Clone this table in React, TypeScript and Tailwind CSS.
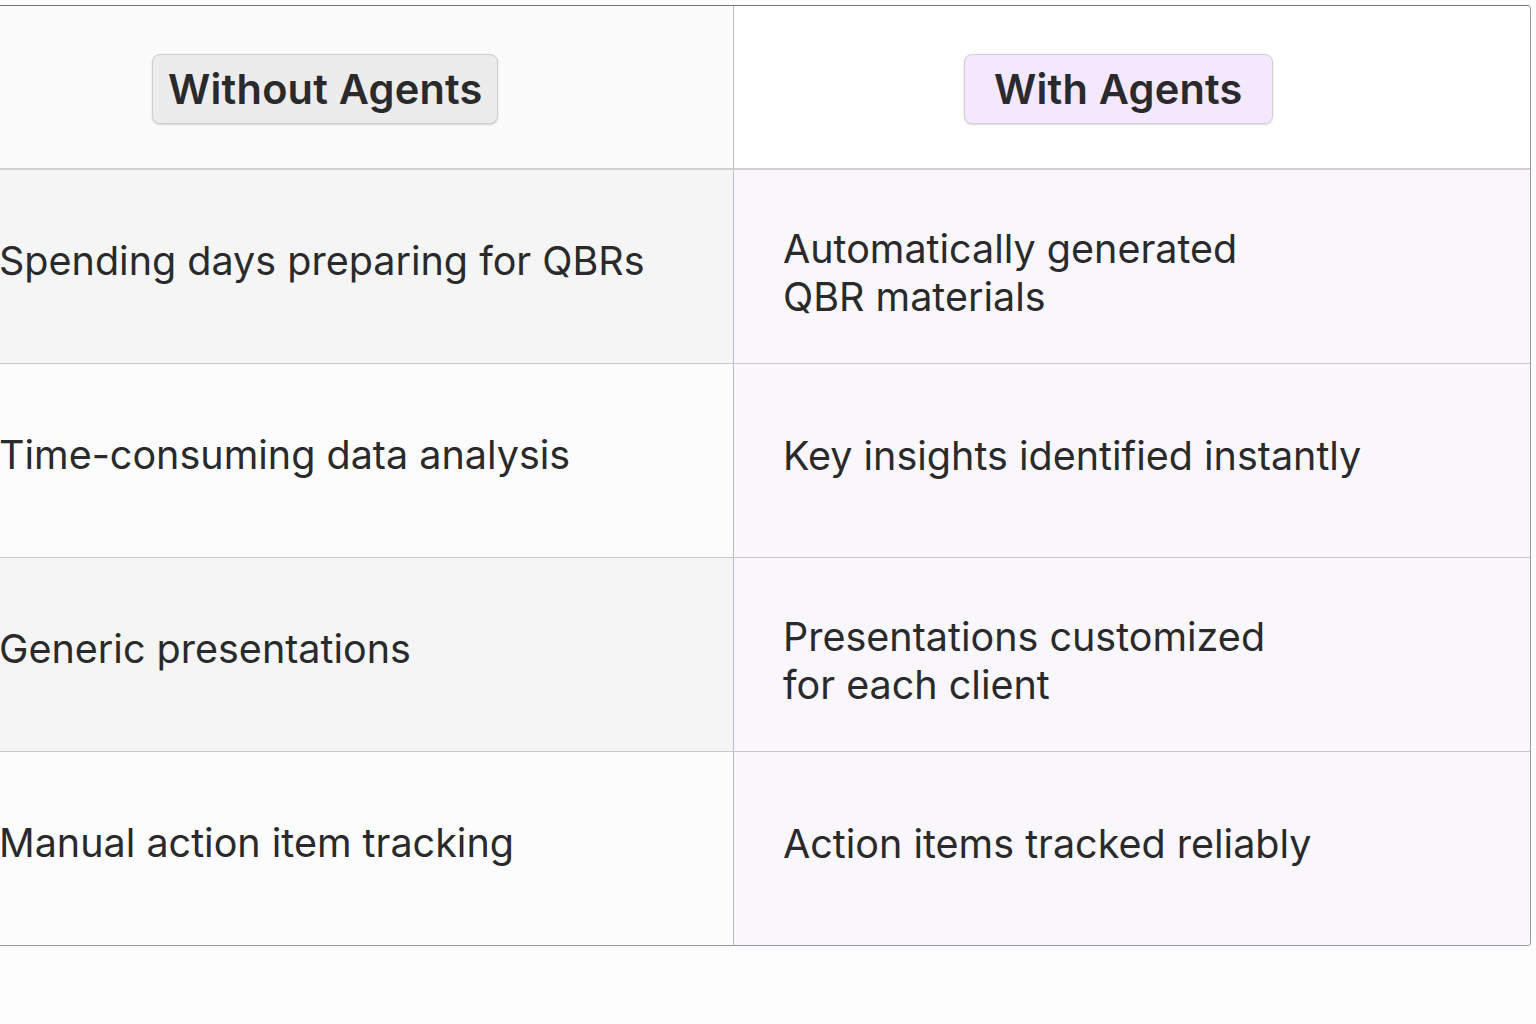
import * as React from 'react';

const rows = [
  { without: 'Spending days preparing for QBRs', with: ['Automatically generated', 'QBR materials'] },
  { without: 'Time-consuming data analysis', with: ['Key insights identified instantly'] },
  { without: 'Generic presentations', with: ['Presentations customized', 'for each client'] },
  { without: 'Manual action item tracking', with: ['Action items tracked reliably'] },
];

export default function App() {
  return (
    <div
      className="min-h-screen bg-[#fdfdfd] pt-[5px] text-[#2a2a2c]"
      style={{ fontFamily: 'Inter, "Noto Sans", sans-serif' }}
    >
      <div className="w-[1531px] overflow-hidden rounded-r-[4px] border-t border-r border-b border-t-[#74747c] border-r-[#9a9aa2] border-b-[#9a9aa2]">
        {/* header */}
        <div className="grid grid-cols-[734px_1fr] border-b-2 border-[#cfcfd2]">
          <div className="flex h-[162px] items-center border-r border-[#bcbcc4] bg-[#fbfbfb] pt-[4px] pl-[152px]">
            <div className="flex h-[70px] items-center rounded-lg border border-[#cdcdcd] bg-[#ececec] px-[15px] text-[41.5px] font-semibold tracking-[0.2px] shadow-[0_1px_2px_rgba(0,0,0,0.15)]">
              Without Agents
            </div>
          </div>
          <div className="flex h-[162px] items-center bg-white pt-[4px] pl-[230px]">
            <div className="flex h-[70px] items-center rounded-lg border border-[#d2cdd8] bg-[#f3e8fd] px-[29px] text-[41.5px] font-semibold tracking-[0.2px] shadow-[0_1px_2px_rgba(0,0,0,0.15)]">
              With Agents
            </div>
          </div>
        </div>

        {rows.map((r, i) => (
          <div
            key={i}
            className={
              i < rows.length - 1
                ? 'grid grid-cols-[734px_1fr] border-b border-[#c9c9cc]'
                : 'grid grid-cols-[734px_1fr]'
            }
          >
            <div
              className={
                i % 2 === 0
                  ? 'flex h-[193px] items-center border-r border-[#bcbcc4] bg-[#f5f5f5] pb-[10px] text-[39.5px]'
                  : 'flex h-[193px] items-center border-r border-[#bcbcc4] bg-[#fcfcfc] pb-[10px] text-[39.5px]'
              }
            >
              <span className="-ml-px">{r.without}</span>
            </div>
            <div
              className={
                r.with.length > 1
                  ? 'flex h-[193px] flex-col justify-center bg-[#f9f7fc] pt-[12px] pl-[49px] text-[39.5px] leading-[48px]'
                  : 'flex h-[193px] flex-col justify-center bg-[#f9f7fc] pb-[10px] pl-[49px] text-[39.5px] leading-[48px]'
              }
            >
              {r.with.map((l) => (
                <span key={l}>{l}</span>
              ))}
            </div>
          </div>
        ))}
      </div>
    </div>
  );
}
